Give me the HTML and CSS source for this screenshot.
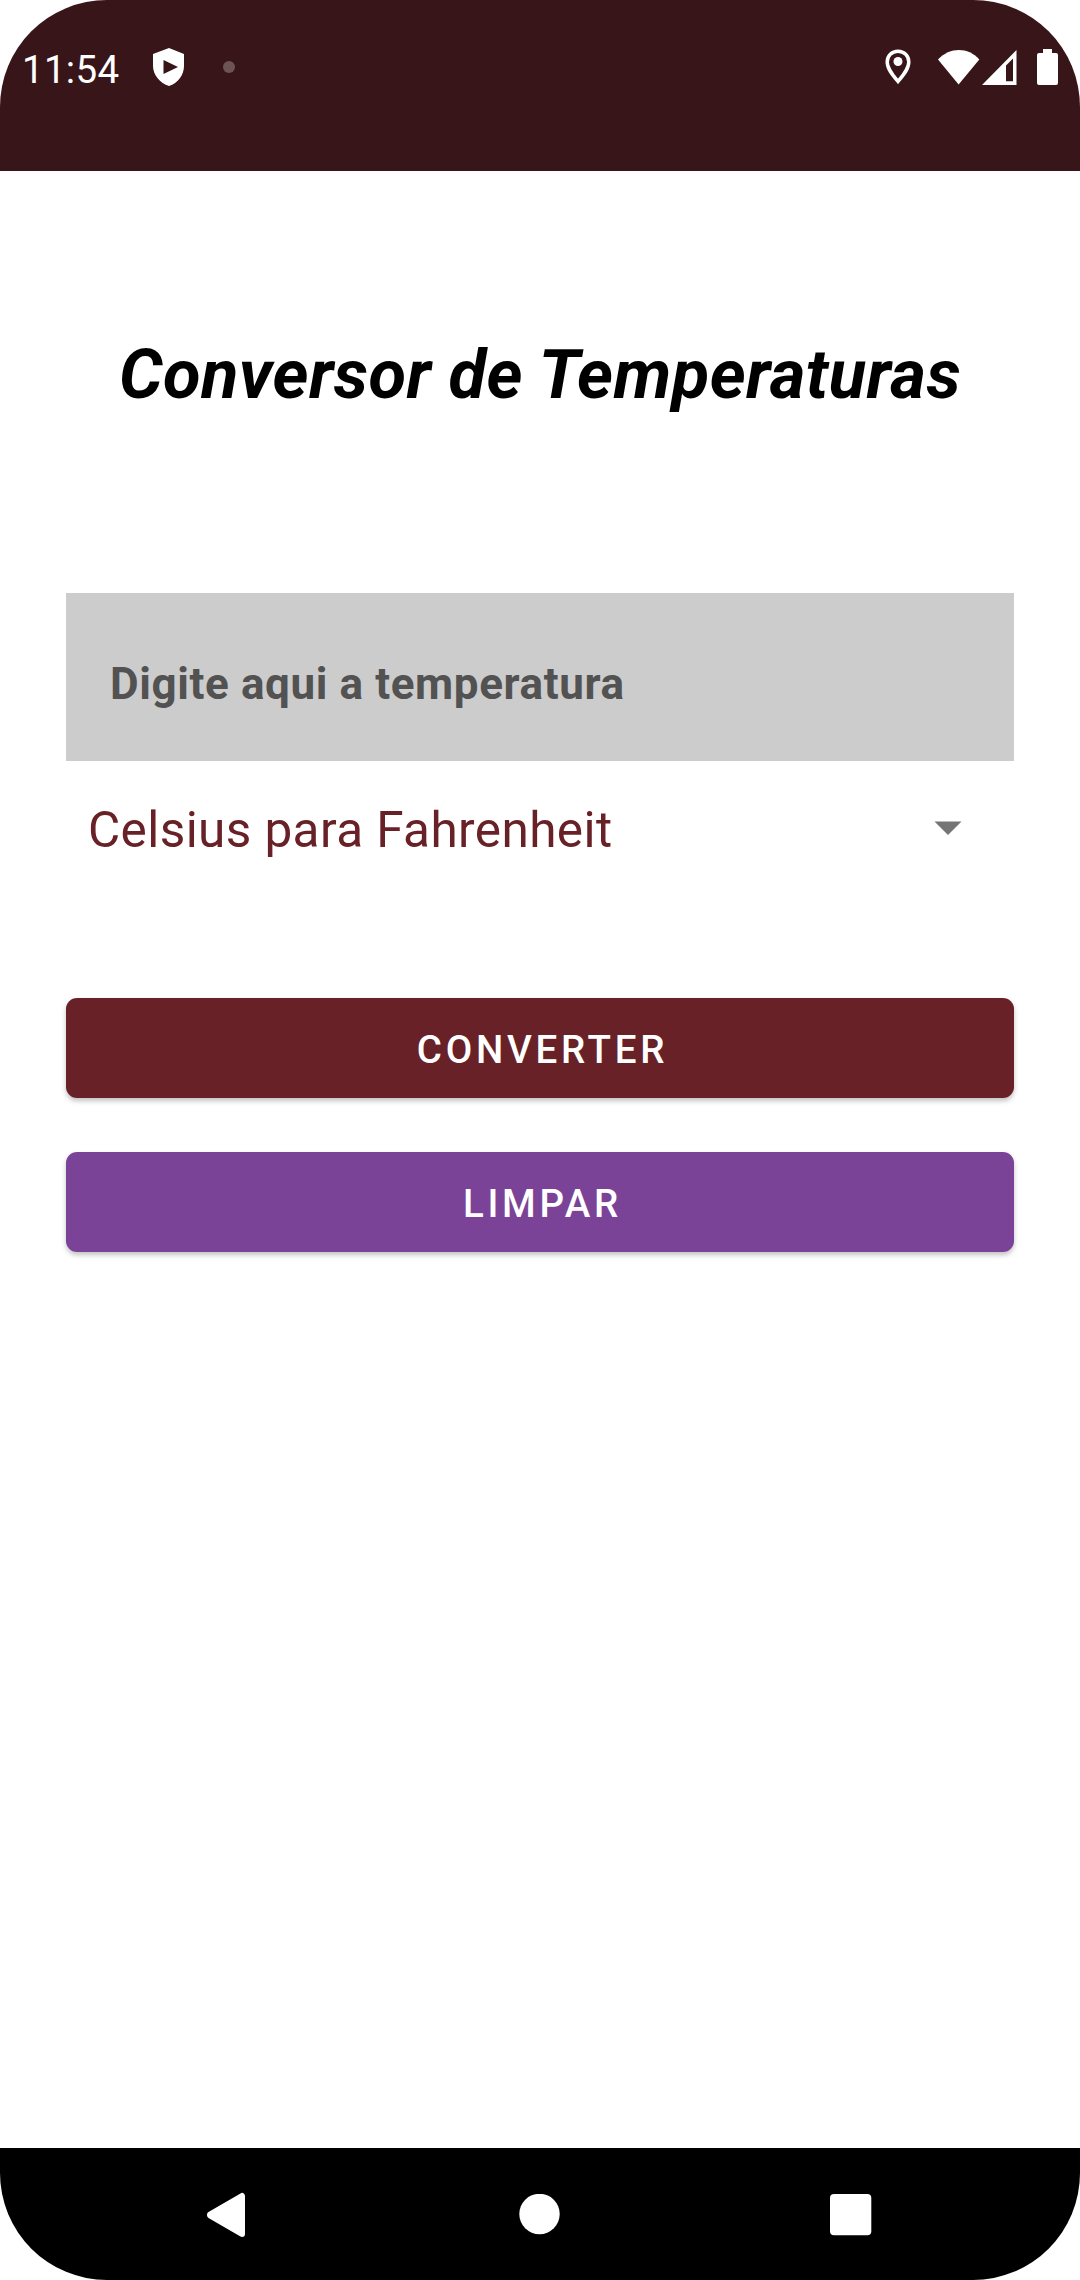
FILE: index.html
```html
<!DOCTYPE html>
<html lang="pt-BR">
<head>
<meta charset="utf-8">
<title>Conversor de Temperaturas</title>
<link rel="stylesheet" href="styles.css">
</head>
<body>
<div class="screen">
  <header class="status-bar">
    <div class="status-left">
      <span class="clock">11:54</span>
      <svg class="shield" width="32" height="38" viewBox="0 0 32 38"><path fill="#fff" fill-rule="evenodd" d="M16 0 31 6V18C31 27 25 35 16 38 7 35 0 27 0 18V6ZM10.500 12V26L25 19Z"/></svg>
      <span class="dot"></span>
    </div>
    <div class="status-right">
      <svg class="pin" width="26" height="36" viewBox="0 0 26 36"><path fill="none" stroke="#fff" stroke-width="3.500" d="M13 2.200C6.800 2.200 2.200 6.900 2.200 13 2.200 20 8 26.500 13 32.500 18 26.500 23.800 20 23.800 13 23.800 6.900 19.200 2.200 13 2.200Z"/><circle cx="13" cy="12.500" r="4.500" fill="#fff"/></svg>
      <svg class="wifi" width="42" height="35" viewBox="0 0 42 35"><path fill="#fff" d="M0 9.500C12-3.100 30-3.100 41.300 9.500L20.600 34.500Z"/></svg>
      <svg class="signal" width="35" height="35" viewBox="0 0 35 35"><path fill="#fff" fill-rule="evenodd" d="M34.500 0V35H0ZM31 8.500 24 15.500V31.300H31Z"/></svg>
      <svg class="battery" width="21" height="36" viewBox="0 0 21 36"><path fill="#fff" d="M6 0H15V4H19Q21 4 21 6V34Q21 36 19 36H2Q0 36 0 34V6Q0 4 2 4H6Z"/></svg>
    </div>
  </header>

  <main class="content">
    <h1 class="title">Conversor de Temperaturas</h1>
    <input class="field" type="text" placeholder="Digite aqui a temperatura">
    <div class="spinner">
      <span>Celsius para Fahrenheit</span>
      <svg width="28" height="14" viewBox="0 0 28 14"><path fill="#757575" d="M.5.500H27.500L14 14Z"/></svg>
    </div>
    <div class="actions">
      <button class="button convert" type="button">CONVERTER</button>
      <button class="button clear" type="button">LIMPAR</button>
    </div>
  </main>

  <nav class="nav-bar">
    <svg width="42" height="46" viewBox="0 0 42 46"><path fill="#fff" stroke="#fff" stroke-width="6" stroke-linejoin="round" d="M36 4V42L4 23.300V22.700Z"/></svg>
    <svg width="42" height="42" viewBox="0 0 42 42"><circle cx="21.500" cy="20" r="20.200" fill="#fff"/></svg>
    <svg width="42" height="42" viewBox="0 0 42 42"><rect width="41.300" height="41.300" rx="4" fill="#fff"/></svg>
  </nav>
</div>
</body>
</html>
```

FILE: styles.css
```css
* {
  box-sizing: border-box;
}

body {
  margin: 0;
  background: #fff;
  font-family: Roboto, "Liberation Sans", sans-serif;
}

svg {
  display: block;
  flex: none;
}

.screen {
  display: flex;
  flex-direction: column;
  width: 1080px;
  height: 2280px;
  overflow: hidden;
  border-radius: 107px;
  background: #fff;
}

.status-bar {
  display: flex;
  justify-content: space-between;
  height: 171px;
  padding: 48px 22px 0 22px;
  background: #381519;
}

.status-left,
.status-right {
  display: flex;
  align-items: center;
  height: 38px;
}

.clock {
  width: 131px;
  font-size: 38.5px;
  letter-spacing: 0.3px;
  line-height: 44px;
  padding-top: 6px;
  color: #fff;
}

.dot {
  width: 12px;
  height: 12px;
  margin-left: 38px;
  border-radius: 50%;
  background: #6e5356;
}

.wifi {
  margin-left: 27px;
}

.signal {
  margin-left: 2px;
}

.battery {
  margin-left: 20px;
}

.content {
  display: flex;
  flex: 1;
  flex-direction: column;
  padding: 159px 66px 0;
}

.title {
  margin: 0;
  font-size: 68.75px;
  font-style: italic;
  font-weight: 700;
  letter-spacing: 0.41px;
  line-height: 90px;
  text-align: center;
  white-space: nowrap;
  color: #000;
}

.field {
  width: 100%;
  height: 168px;
  margin-top: 173px;
  padding: 14px 44px 0;
  border: 0;
  border-radius: 0;
  background: #ccc;
  font: 700 44px Roboto, "Liberation Sans", sans-serif;
  letter-spacing: 0.61px;
  color: #222;
}

.field::placeholder {
  opacity: 1;
  color: #525252;
}

.spinner {
  display: flex;
  align-items: center;
  justify-content: space-between;
  height: 66px;
  margin-top: 34px;
  padding: 0 52px 0 22px;
  font-size: 49.5px;
  letter-spacing: 0.4px;
  line-height: 62px;
  color: #682126;
}

.spinner span {
  padding-top: 4px;
}

.actions {
  display: flex;
  flex-direction: column;
  gap: 54px;
  margin-top: 137px;
}

.button {
  height: 100px;
  padding: 3px 0 0 5px;
  border: 0;
  border-radius: 11px;
  box-shadow: 0 3px 5px rgba(0, 0, 0, 0.24);
  font: 500 38.5px Roboto, "Liberation Sans", sans-serif;
  letter-spacing: 3.7px;
  color: #fff;
}

.convert {
  background: #682127;
}

.clear {
  background: #7b4397;
}

.nav-bar {
  display: flex;
  align-items: center;
  justify-content: space-between;
  height: 132px;
  padding: 1px 208px 0 206px;
  background: #000;
}
```
